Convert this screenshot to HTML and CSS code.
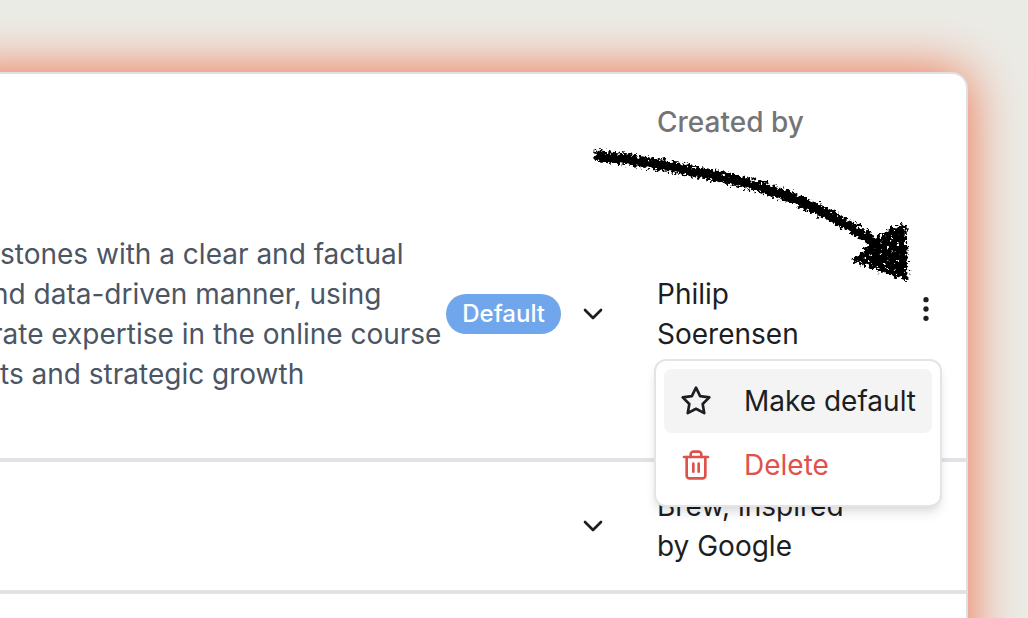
FILE: index.html
```html
<!DOCTYPE html>
<html lang="en">
<head>
    <meta charset="UTF-8">
    <meta name="viewport" content="width=device-width, initial-scale=1.0">
    <title>Created by</title>
    <link rel="stylesheet" href="styles.css">
</head>
<body>
    <div class="card">
        <table class="list">
            <thead>
                <tr>
                    <th class="desc"></th>
                    <th class="status"></th>
                    <th class="author" scope="col">Created by</th>
                    <th class="actions"></th>
                </tr>
            </thead>
            <tbody>
                <tr class="tall">
                    <td class="desc">
                        <span class="line">stones with a clear and factual</span>
                        <span class="line cut">nd data-driven manner, using</span>
                        <span class="line cut">rate expertise in the online course</span>
                        <span class="line">ts and strategic growth</span>
                    </td>
                    <td class="status">
                        <div class="status-box">
                            <span class="badge">Default</span>
                            <button type="button">
                                <svg class="icon" viewBox="0 0 24 24"><path d="m6 9 6 6 6-6"/></svg>
                            </button>
                        </div>
                    </td>
                    <td class="author">Philip Soerensen</td>
                    <td class="actions">
                        <div class="dropdown">
                            <button type="button">
                                <svg class="icon" viewBox="0 0 24 24"><circle cx="12" cy="12" r="1"/><circle cx="12" cy="5" r="1"/><circle cx="12" cy="19" r="1"/></svg>
                            </button>
                            <div class="menu">
                                <button class="item active" type="button">
                                    <svg class="icon" viewBox="0 0 24 24"><path d="M12 2l3.1 6.3 6.9 1-5 4.9 1.2 6.9-6.2-3.3-6.2 3.3L7 14.200 2 9.300l6.900-1z"/></svg>
                                    Make default
                                </button>
                                <button class="item danger" type="button">
                                    <svg class="icon" viewBox="0 0 24 24"><path d="M3 6h18"/><path d="M19 6v14c0 1-1 2-2 2H7c-1 0-2-1-2-2V6"/><path d="M8 6V4c0-1 1-2 2-2h4c1 0 2 1 2 2v2"/><path d="M10 11v6"/><path d="M14 11v6"/></svg>
                                    Delete
                                </button>
                            </div>
                        </div>
                    </td>
                </tr>
                <tr>
                    <td class="desc"></td>
                    <td class="status">
                        <div class="status-box">
                            <button type="button">
                                <svg class="icon" viewBox="0 0 24 24"><path d="m6 9 6 6 6-6"/></svg>
                            </button>
                        </div>
                    </td>
                    <td class="author">Brew, inspired by Google</td>
                    <td class="actions"></td>
                </tr>
            </tbody>
        </table>

        <!-- hand drawn arrow to the row menu -->
        <svg class="arrow" viewBox="0 0 340 150">
            <filter id="rough" x="-5%" y="-10%" width="110%" height="120%">
                <feTurbulence type="fractalNoise" baseFrequency="0.3" numOctaves="3" seed="4" result="noise"/>
                <feDisplacementMap in="SourceGraphic" in2="noise" scale="10" xChannelSelector="R" yChannelSelector="G" result="edge"/>
                <feColorMatrix in="noise" type="matrix" values="0 0 0 0 0  0 0 0 0 0  0 0 0 0 0  0 0 -14 0 10.5" result="holes"/>
                <feComposite in="edge" in2="holes" operator="in"/>
            </filter>
            <g filter="url(#rough)">
                <path class="shaft" d="M15 15C60 21 120 31 170 44C215 56 262 78 300 107"/>
                <path class="head" d="M312 90L324 86L326 138L275 120L290 108L300 98Z"/>
            </g>
            <path class="core" d="M20 17C62 22 120 32 170 45C215 57 262 79 300 108"/>
        </svg>
    </div>
</body>
</html>
```
FILE: styles.css
```css
* {
    box-sizing: border-box;
}

html {
    height: 100%;
    overflow: hidden;
}

body {
    margin: 0;
    height: 100%;
    display: flex;
    overflow: hidden;
    background-color: #ebebe6;
    font-family: Inter, "Liberation Sans", sans-serif;
    font-size: 28px;
    line-height: 40px;
    color: #1c1e22;
}

/* the card runs past the left and bottom edges of the window */
.card {
    position: relative;
    flex: 1;
    margin: 72px 60px -60px -60px;
    background-color: white;
    border: 2px solid #dfdfe4;
    border-radius: 16px;
    box-shadow: 0 0 52px rgb(240, 108, 66);
}

.list {
    width: 100%;
    border-collapse: separate;
    border-spacing: 0;
    table-layout: fixed;
}

th {
    height: 96px;
    padding: 0;
    text-align: left;
    font-weight: 500;
    color: #757575;
}

td {
    padding: 24px 0;
    border-bottom: 4px solid #e2e2e6;
    vertical-align: middle;
}

.tall td {
    padding-top: 64px;
    padding-bottom: 64px;
}

th.desc, td.desc {
    padding-left: 58px;
    color: #4b5563;
}

.line {
    display: block;
    white-space: nowrap;
}

.cut {
    text-indent: -8px;
}

.status {
    width: 179px;
}

.status-box {
    display: flex;
    align-items: center;
    justify-content: flex-end;
    gap: 16px;
    padding-right: 16px;
}

.badge {
    padding: 0 16px;
    border-radius: 20px;
    background-color: #70a7ec;
    color: white;
    font-size: 24px;
    font-weight: 500;
}

th.author, td.author {
    width: 261px;
    padding-left: 32px;
    padding-right: 16px;
}

th.actions, td.actions {
    width: 80px;
    padding-right: 24px;
    text-align: right;
}

button {
    padding: 0;
    border: none;
    background: none;
    color: inherit;
    font: inherit;
}

.icon {
    width: 32px;
    height: 32px;
    flex: none;
    fill: none;
    stroke: currentColor;
    stroke-width: 2;
    stroke-linecap: round;
    stroke-linejoin: round;
}

.status-box .icon {
    display: block;
}

.dropdown {
    position: relative;
}

.menu {
    position: absolute;
    top: 66px;
    right: 0;
    z-index: 2;
    width: max-content;
    padding: 8px;
    background-color: white;
    border: 2px solid #e4e4e5;
    border-radius: 12px;
    box-shadow: 0 8px 12px -2px rgba(0, 0, 0, 0.1), 0 4px 8px -4px rgba(0, 0, 0, 0.1);
}

.item {
    display: flex;
    align-items: center;
    gap: 32px;
    width: 100%;
    padding: 12px 16px;
    border-radius: 8px;
}

.active {
    background-color: #f4f4f4;
}

.danger {
    color: #df524c;
}

.arrow {
    position: absolute;
    top: 66px;
    right: 46px;
    width: 340px;
    height: 150px;
    pointer-events: none;
}

.shaft {
    fill: none;
    stroke: black;
    stroke-width: 11;
}

.core {
    fill: none;
    stroke: black;
    stroke-width: 5;
}

.head {
    fill: black;
    stroke: black;
    stroke-width: 5;
    stroke-linejoin: round;
}
```
